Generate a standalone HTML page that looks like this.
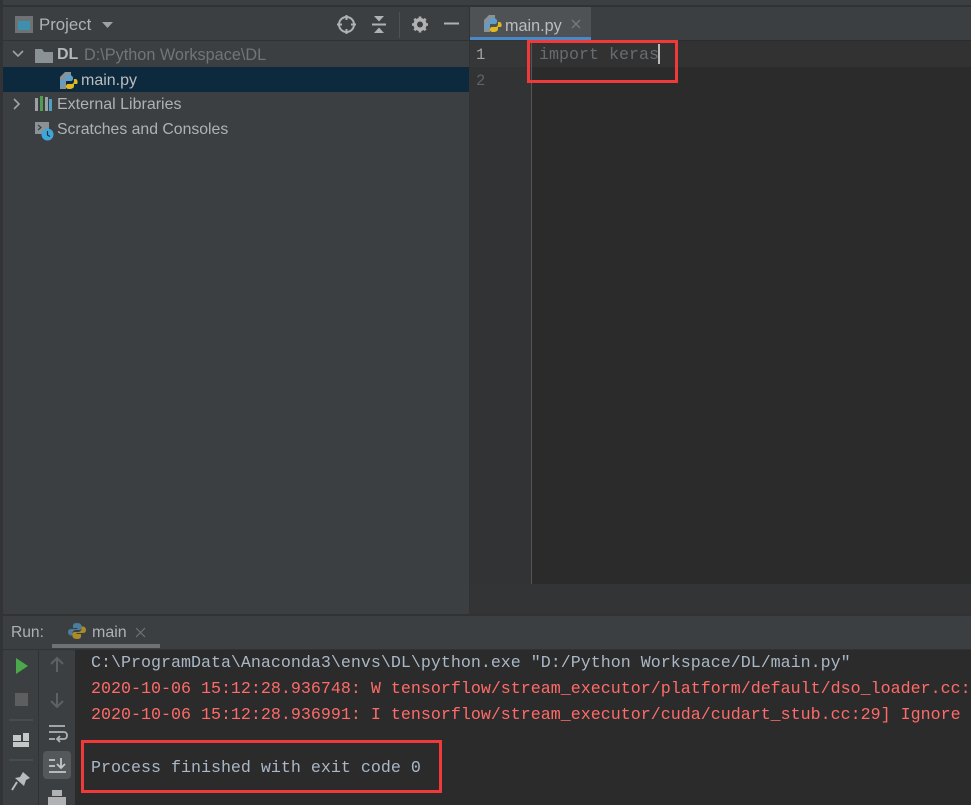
<!DOCTYPE html>
<html><head><meta charset="utf-8"><style>
html,body{margin:0;padding:0;background:#3c3f41}
body{width:971px;height:805px;position:relative;overflow:hidden;font-family:"Liberation Sans",sans-serif}
.a{position:absolute}
.t{position:absolute;white-space:pre;font-size:16px;line-height:20px;color:#afb1b3}
.m{position:absolute;white-space:pre;font-family:"Liberation Mono",monospace;font-size:16.67px;line-height:20px}
svg{position:absolute;overflow:visible}
</style></head><body>
<div class="a" style="left:0;top:0;width:3px;height:805px;background:#313335"></div>
<div class="a" style="left:0;top:5px;width:971px;height:2px;background:#323232"></div>
<div class="a" style="left:3px;top:40px;width:466px;height:1px;background:#323232"></div>
<div class="a" style="left:469px;top:7px;width:1px;height:607px;background:#323232"></div>

<!-- project header -->
<svg style="left:0;top:0" width="120" height="40"><rect x="15" y="16" width="18" height="17" fill="#6e7274"/><rect x="18" y="21" width="12" height="9" fill="#3f8fae"/><path d="M102 22h11l-5.500 6z" fill="#9fa2a4"/></svg>
<div class="t" style="left:39px;top:15px;font-size:16.8px">Project</div>
<svg style="left:330px;top:7px" width="140" height="34" fill="none" stroke="#afb1b3">
<circle cx="16.500" cy="17.500" r="7.500" stroke-width="2"/><path d="M16.500 8v5M16.500 22v5M7 17.500h5M21 17.500h5" stroke-width="2"/>
<path d="M42 17.500h14" stroke-width="2"/><path d="M44 9h10l-5 5.500zM44 26h10l-5-5.500z" fill="#afb1b3" stroke="none"/>
<path d="M69.500 5v26" stroke="#4e5254"/>
<circle cx="90" cy="17.500" r="4.800" stroke-width="3.600"/><path d="M90 9.500v3M90 22.500v3M82 17.500h3M95 17.500h3M84.300 11.800l2 2M93.700 21.200l2 2M95.700 11.800l-2 2M86.300 21.200l-2 2" stroke-width="2.600"/>
<path d="M114 16.500h15" stroke-width="2"/></svg>

<!-- tree -->
<svg style="left:0;top:41px" width="60" height="100" fill="none">
<path d="M13 10l5 5 5-5" stroke="#a0a3a5" stroke-width="1.600"/>
<path d="M35 8h7l2 3h9v11H35z" fill="#8a9298"/>
<path d="M14 58l5 5-5 5" stroke="#a0a3a5" stroke-width="1.600"/>
<rect x="35" y="57" width="3" height="13" fill="#9aa0a3"/><rect x="40" y="55" width="3" height="15" fill="#4f9e4f"/><rect x="45" y="56" width="3" height="14" fill="#9aa0a3"/><rect x="49" y="58" width="3" height="12" fill="#4f9ec4"/>
<path d="M35 81h14v9l-6 3h-8z" fill="#8a9298"/><path d="M38 84l3 2.500-3 2.500" stroke="#3c3f41" stroke-width="1.200"/>
<circle cx="47.500" cy="93.500" r="6" fill="#3ea6d8"/><path d="M47.500 90v4l2.500 1.500" stroke="#23323a" stroke-width="1.200"/>
</svg>
<div class="t" style="left:57px;top:45px;color:#b4b6b8;font-weight:bold">DL</div>
<div class="t" style="left:84px;top:45px;color:#727577;font-size:16.25px">D:\Python Workspace\DL</div>
<div class="a" style="left:3px;top:67px;width:466px;height:25px;background:#0d293e"></div>
<svg style="left:59px;top:71px" width="20" height="20"><path d="M1 6l5-5h6v7H1v10z" fill="#8a9298"/><path d="M1 8h6v10H1z" fill="#8a9298"/><path d="M10 4c-3 0-4 1-4 3v2H2c-1 1-1 5 1 6h2v-2c0-2 1-3 3-3h4c1 0 2-1 2-2V7c0-2-2-3-4-3z" fill="#5d9fc9"/><path d="M10 18c3 0 5-1 5-3v-2h3c1-1 1-4-1-5h-2v2c0 2-1 3-3 3H9c-1 0-2 1-2 2v1c0 1 1 2 3 2z" fill="#e0b81f"/></svg>
<div class="t" style="left:81px;top:71px;color:#bbbdbf">main.py</div>
<div class="t" style="left:57px;top:95px">External Libraries</div>
<div class="t" style="left:57px;top:120px;font-size:15.8px">Scratches and Consoles</div>

<!-- editor -->
<div class="a" style="left:470px;top:7px;width:501px;height:33px;background:#3c3f41"></div>
<div class="a" style="left:470px;top:7px;width:121px;height:30px;background:#4e5254"></div>
<div class="a" style="left:470px;top:37px;width:121px;height:3px;background:#4a88c7"></div>
<div class="a" style="left:470px;top:40px;width:501px;height:544px;background:#2b2b2b"></div>
<div class="a" style="left:470px;top:40px;width:61px;height:544px;background:#313335"></div>
<div class="a" style="left:531px;top:40px;width:1px;height:544px;background:#555"></div>
<div class="a" style="left:532px;top:41px;width:439px;height:26px;background:#323232"></div>
<div class="a" style="left:470px;top:41px;width:61px;height:26px;background:#353739"></div>
<div class="a" style="left:470px;top:584px;width:501px;height:30px;background:#323436"></div>
<svg style="left:483px;top:14px" width="20" height="20"><path d="M1 6l5-5h6v7H1v10z" fill="#8a9298"/><path d="M1 8h6v10H1z" fill="#8a9298"/><path d="M10 4c-3 0-4 1-4 3v2H2c-1 1-1 5 1 6h2v-2c0-2 1-3 3-3h4c1 0 2-1 2-2V7c0-2-2-3-4-3z" fill="#5d9fc9"/><path d="M10 18c3 0 5-1 5-3v-2h3c1-1 1-4-1-5h-2v2c0 2-1 3-3 3H9c-1 0-2 1-2 2v1c0 1 1 2 3 2z" fill="#e0b81f"/></svg>
<div class="t" style="left:505px;top:16px;color:#bbbdbf;font-size:16.2px">main.py</div>
<svg style="left:571px;top:19px" width="12" height="12"><path d="M1 1l8 8M9 1l-8 8" stroke="#767a7c" stroke-width="1.300"/></svg>
<div class="m" style="left:476px;top:45px;color:#a4a3a3;font-size:15.5px">1</div>
<div class="m" style="left:476px;top:71px;color:#606366;font-size:15.5px">2</div>
<div class="m" style="left:539px;top:46px;color:#666c70">import keras</div>
<div class="a" style="left:658px;top:44px;width:2px;height:20px;background:#bbb"></div>
<div class="a" style="left:527px;top:40px;width:145px;height:37px;border:3px solid #f03a3a;box-sizing:content-box"></div>

<!-- run panel -->
<div class="a" style="left:3px;top:614px;width:968px;height:2px;background:#323232"></div>
<div class="t" style="left:11px;top:623px;font-size:15.6px">Run:</div>
<svg style="left:68px;top:622px" width="18" height="18"><path d="M9 1C5.500 1 5 2.500 5 4v2h4.500v1H3C1 7 0 8.500 0 10s1 3.500 3 3.500h1.500v-2.500c0-1.500 1.500-3 3-3h4c1.200 0 2-1 2-2V4c0-1.500-1.500-3-4.500-3z" fill="#4c7d9e"/><path d="M9 17c3.500 0 4-1.500 4-3v-2H8.500v-1H15c2 0 3-1.500 3-3s-1-3.500-3-3.500h-1.500V7c0 1.500-1.500 3-3 3h-4c-1.200 0-2 1-2 2v2c0 1.500 1.500 3 4.500 3z" fill="#a98c28"/></svg>
<div class="t" style="left:92px;top:623px;color:#afb1b3">main</div>
<svg style="left:135px;top:627px" width="12" height="12"><path d="M1 1l9 9M10 1l-9 9" stroke="#6e7274" stroke-width="1.200"/></svg>
<div class="a" style="left:52px;top:644px;width:108px;height:4px;background:#6e7274"></div>
<div class="a" style="left:3px;top:649px;width:968px;height:1px;background:#323232"></div>
<div class="a" style="left:75px;top:650px;width:896px;height:155px;background:#2b2b2b"></div>
<div class="a" style="left:38px;top:650px;width:1px;height:155px;background:#323232"></div>
<svg style="left:0;top:650px" width="75" height="155" fill="none">
<path d="M16 8v16l12-8z" fill="#4ca84c"/>
<rect x="15" y="43" width="13" height="13" fill="#5c5e60"/>
<path d="M9 70h24M9 110h24" stroke="#55585a"/>
<rect x="13" y="85" width="8" height="6" fill="#c4c6c8"/><rect x="23" y="83" width="6" height="8" fill="#c4c6c8"/><rect x="13" y="92" width="16" height="5" fill="#c4c6c8"/>
<path d="M23 122l7 6-4 2-2 6-9-8 5-1z" fill="#b8babc"/><path d="M17 132l-5 8" stroke="#b8babc" stroke-width="2"/>
<path d="M57 22V9M51 14l6-6 6 6" stroke="#5e6163" stroke-width="2"/>
<path d="M57 43v13M51 51l6 6 6-6" stroke="#5e6163" stroke-width="2"/>
<path d="M49 76h16M49 82h15c4 0 4 7 0 7h-6M60 86l-3 3 3 3M49 89h6" stroke="#b0b2b4" stroke-width="1.800"/>
<rect x="43" y="101" width="28" height="28" rx="4" fill="#55585a"/>
<path d="M49 110h6M49 116h6M49 122h17M61 108v10M57 114l4 4 4-4" stroke="#c4c6c8" stroke-width="1.800"/>
<path d="M52 140h10v6H52z" fill="#b0b2b4"/><path d="M48 147h18v8H48z" fill="#b0b2b4"/>
</svg>
<div class="m" style="left:91px;top:654px;color:#a9b7c6">C:\ProgramData\Anaconda3\envs\DL\python.exe "D:/Python Workspace/DL/main.py"</div>
<div class="m" style="left:91px;top:680px;color:#ff6b68">2020-10-06 15:12:28.936748: W tensorflow/stream_executor/platform/default/dso_loader.cc:</div>
<div class="m" style="left:91px;top:706px;color:#ff6b68">2020-10-06 15:12:28.936991: I tensorflow/stream_executor/cuda/cudart_stub.cc:29] Ignore</div>
<div class="m" style="left:91px;top:759px;color:#a9b7c6">Process finished with exit code 0</div>
<div class="a" style="left:81px;top:740px;width:355px;height:47px;border:3px solid #f03a3a"></div>
</body></html>
